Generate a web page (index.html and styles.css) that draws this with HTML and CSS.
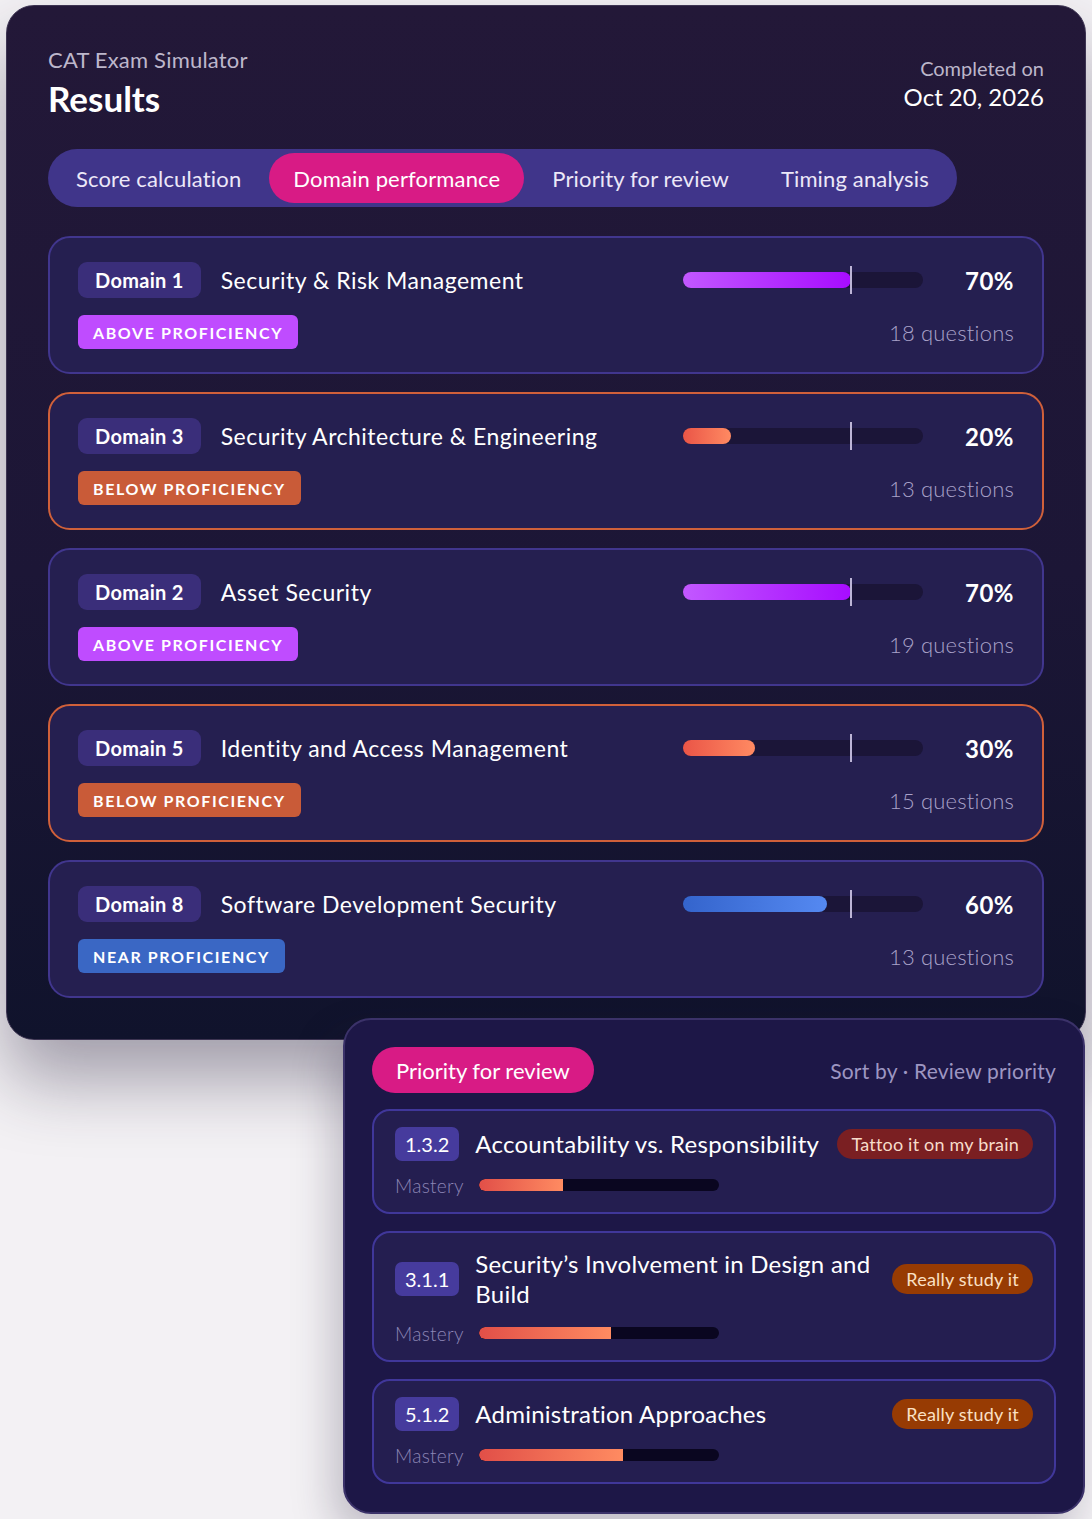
FILE: index.html
```html
<!DOCTYPE html>
<html lang="en">
<head>
<meta charset="utf-8">
<title>CAT Exam Simulator – Results</title>
<link rel="stylesheet" href="styles.css">
</head>
<body>
<div class="page">
  <section class="results">
    <header class="results-head">
      <div class="title-block">
        <div class="eyebrow">CAT Exam Simulator</div>
        <h1 class="title">Results</h1>
      </div>
      <div class="completed">
        <div class="completed-label">Completed on</div>
        <div class="completed-date">Oct 20, 2026</div>
      </div>
    </header>

    <nav class="tabs">
      <span class="tab">Score calculation</span>
      <span class="tab tab--active">Domain performance</span>
      <span class="tab">Priority for review</span>
      <span class="tab">Timing analysis</span>
    </nav>

    <div class="domains">
      <article class="domain">
        <div class="domain-row">
          <div class="domain-id"><span class="domain-tag">Domain 1</span><span class="domain-name">Security &amp; Risk Management</span></div>
          <div class="domain-score"><div class="bar"><div class="bar-fill bar-fill--above" style="width:70%"></div><span class="bar-mark"></span></div><span class="pct">70%</span></div>
        </div>
        <div class="domain-row">
          <span class="status status--above">Above proficiency</span>
          <span class="qcount">18 questions</span>
        </div>
      </article>

      <article class="domain domain--below">
        <div class="domain-row">
          <div class="domain-id"><span class="domain-tag">Domain 3</span><span class="domain-name">Security Architecture &amp; Engineering</span></div>
          <div class="domain-score"><div class="bar"><div class="bar-fill bar-fill--below" style="width:20%"></div><span class="bar-mark"></span></div><span class="pct">20%</span></div>
        </div>
        <div class="domain-row">
          <span class="status status--below">Below proficiency</span>
          <span class="qcount">13 questions</span>
        </div>
      </article>

      <article class="domain">
        <div class="domain-row">
          <div class="domain-id"><span class="domain-tag">Domain 2</span><span class="domain-name">Asset Security</span></div>
          <div class="domain-score"><div class="bar"><div class="bar-fill bar-fill--above" style="width:70%"></div><span class="bar-mark"></span></div><span class="pct">70%</span></div>
        </div>
        <div class="domain-row">
          <span class="status status--above">Above proficiency</span>
          <span class="qcount">19 questions</span>
        </div>
      </article>

      <article class="domain domain--below">
        <div class="domain-row">
          <div class="domain-id"><span class="domain-tag">Domain 5</span><span class="domain-name">Identity and Access Management</span></div>
          <div class="domain-score"><div class="bar"><div class="bar-fill bar-fill--below" style="width:30%"></div><span class="bar-mark"></span></div><span class="pct">30%</span></div>
        </div>
        <div class="domain-row">
          <span class="status status--below">Below proficiency</span>
          <span class="qcount">15 questions</span>
        </div>
      </article>

      <article class="domain">
        <div class="domain-row">
          <div class="domain-id"><span class="domain-tag">Domain 8</span><span class="domain-name">Software Development Security</span></div>
          <div class="domain-score"><div class="bar"><div class="bar-fill bar-fill--near" style="width:60%"></div><span class="bar-mark"></span></div><span class="pct">60%</span></div>
        </div>
        <div class="domain-row">
          <span class="status status--near">Near proficiency</span>
          <span class="qcount">13 questions</span>
        </div>
      </article>
    </div>
  </section>

  <section class="priority">
    <header class="priority-head">
      <span class="priority-pill">Priority for review</span>
      <span class="sort">Sort by · Review priority</span>
    </header>
    <div class="topics">
      <article class="topic">
        <div class="topic-row">
          <span class="topic-code">1.3.2</span>
          <span class="topic-name">Accountability vs. Responsibility</span>
          <span class="urgency urgency--tattoo">Tattoo it on my brain</span>
        </div>
        <div class="mastery">
          <span class="mastery-label">Mastery</span>
          <div class="mastery-bar"><div class="mastery-fill" style="width:35%"></div></div>
        </div>
      </article>
      <article class="topic">
        <div class="topic-row">
          <span class="topic-code">3.1.1</span>
          <span class="topic-name">Security’s Involvement in Design and Build</span>
          <span class="urgency urgency--study">Really study it</span>
        </div>
        <div class="mastery">
          <span class="mastery-label">Mastery</span>
          <div class="mastery-bar"><div class="mastery-fill" style="width:55%"></div></div>
        </div>
      </article>
      <article class="topic">
        <div class="topic-row">
          <span class="topic-code">5.1.2</span>
          <span class="topic-name">Administration Approaches</span>
          <span class="urgency urgency--study">Really study it</span>
        </div>
        <div class="mastery">
          <span class="mastery-label">Mastery</span>
          <div class="mastery-bar"><div class="mastery-fill" style="width:60%"></div></div>
        </div>
      </article>
    </div>
  </section>
</div>
</body>
</html>
```

FILE: styles.css
```css
* { box-sizing: border-box; }

html, body {
  margin: 0;
  padding: 0;
}

body {
  background: #f3f1f4;
  font-family: "Lato", "Inter", "Liberation Sans", sans-serif;
  color: #ffffff;
  width: 1092px;
  min-height: 1519px;
  overflow: hidden;
}

.page {
  display: flex;
  flex-direction: column;
  padding: 5px 6px 0 6px;
}

/* ---------- Results card ---------- */
.results {
  position: relative;
  z-index: 1;
  background: linear-gradient(180deg, #231838 0%, #1c1636 55%, #10132c 100%);
  border: 1px solid #3d3452;
  border-radius: 28px;
  padding: 41px;
  box-shadow: 0 40px 70px rgba(40, 32, 60, 0.4);
}

.results-head {
  display: flex;
  justify-content: space-between;
  align-items: flex-end;
}

.eyebrow {
  font-size: 22px;
  line-height: 26px;
  letter-spacing: 0.2px;
  color: #bdb7cb;
}

.title {
  margin: 5px 0 0 0;
  font-size: 35px;
  line-height: 40px;
  font-weight: 700;
}

.completed {
  text-align: right;
  padding-bottom: 6px;
}

.completed-label {
  font-size: 20px;
  line-height: 22px;
  margin-bottom: 3px;
  color: #bcb6ca;
}

.completed-date {
  font-size: 24px;
  line-height: 30px;
  color: #ffffff;
}

/* ---------- Tabs ---------- */
.tabs {
  display: inline-flex;
  align-self: flex-start;
  gap: 4px;
  padding: 4px;
  margin-top: 31px;
  background: #40358a;
  border-radius: 999px;
}

.tab {
  display: flex;
  align-items: center;
  height: 50px;
  padding: 0 24px;
  font-size: 22px;
  letter-spacing: 0.15px;
  color: #ece8f8;
  border-radius: 999px;
  white-space: nowrap;
}

.tab--active {
  background: #d81b85;
  color: #ffffff;
}

/* ---------- Domain cards ---------- */
.domains {
  display: flex;
  flex-direction: column;
  gap: 18px;
  margin-top: 29px;
}

.domain {
  display: flex;
  flex-direction: column;
  gap: 17px;
  background: #251f50;
  border: 2px solid #41368e;
  border-radius: 22px;
  padding: 24px 28px 23px 28px;
}

.domain--below {
  border-color: #d0603a;
}

.domain-row {
  display: flex;
  justify-content: space-between;
  align-items: center;
}

.domain-id {
  display: flex;
  align-items: center;
  gap: 20px;
}

.domain-tag {
  display: inline-flex;
  align-items: center;
  height: 36px;
  padding: 0 17px;
  background: #3a2e7a;
  border-radius: 9px;
  font-size: 20px;
  letter-spacing: 0.3px;
  font-weight: 700;
}

.domain-name {
  font-size: 23px;
  letter-spacing: 0.5px;
  color: #ffffff;
}

.domain-score {
  display: flex;
  align-items: center;
}

.bar {
  position: relative;
  width: 240px;
  height: 16px;
  background: #1b1538;
  border-radius: 8px;
}

.bar-fill {
  height: 100%;
  border-radius: 8px;
}

.bar-fill--above { background: linear-gradient(90deg, #c258ff, #a70cff); }
.bar-fill--below { background: linear-gradient(90deg, #ea5547, #ff8a62); }
.bar-fill--near  { background: linear-gradient(90deg, #3464cc, #5589f1); }

.bar-mark {
  position: absolute;
  left: 70%;
  top: -6px;
  width: 2px;
  height: 28px;
  margin-left: -1px;
  background: #bdb5d6;
}

.pct {
  width: 91px;
  text-align: right;
  font-size: 24px;
  letter-spacing: 0.5px;
  font-weight: 700;
}

.status {
  display: inline-flex;
  align-items: center;
  height: 34px;
  padding: 0 15px;
  border-radius: 6px;
  font-size: 16px;
  font-weight: 700;
  letter-spacing: 1.6px;
  text-transform: uppercase;
  color: #ffffff;
}

.status--above { background: #bf4cff; }
.status--below { background: #c95b38; }
.status--near  { background: #3a67c4; }

.qcount {
  font-size: 22px;
  letter-spacing: 0.2px;
  color: #a9a2c9;
  font-weight: 300;
}

/* ---------- Priority panel ---------- */
.priority {
  position: relative;
  z-index: 2;
  align-self: flex-end;
  width: 742px;
  margin-top: -22px;
  margin-right: 1px;
  background: #1d1747;
  border: 2px solid #3b3269;
  border-radius: 28px;
  padding: 27px 27px 28px 27px;
  box-shadow: -10px 20px 40px rgba(40, 32, 60, 0.25);
}

.priority-head {
  display: flex;
  justify-content: space-between;
  align-items: center;
}

.priority-pill {
  display: inline-flex;
  align-items: center;
  height: 46px;
  padding: 0 24px;
  background: #d81b85;
  border-radius: 999px;
  font-size: 22px;
}

.sort {
  font-size: 21px;
  letter-spacing: 0.2px;
  color: #9d96c2;
}

.topics {
  display: flex;
  flex-direction: column;
  gap: 17px;
  margin-top: 16px;
}

.topic {
  display: flex;
  flex-direction: column;
  gap: 13px;
  background: #241e50;
  border: 2px solid #40379a;
  border-radius: 18px;
  padding: 16px 21px 16px 21px;
}

.topic-row {
  display: flex;
  align-items: center;
  gap: 16px;
}

.topic-code {
  display: inline-flex;
  align-items: center;
  flex: none;
  height: 34px;
  padding: 0 10px;
  background: #463b9d;
  border-radius: 7px;
  font-size: 20px;
}

.topic-name {
  flex: 1;
  font-size: 24px;
  line-height: 30px;
  letter-spacing: 0.25px;
}

.urgency {
  display: inline-flex;
  align-items: center;
  flex: none;
  height: 30px;
  padding: 0 14px;
  border-radius: 15px;
  font-size: 18px;
  letter-spacing: 0.2px;
}

.urgency--tattoo { background: #7a1f22; color: #f7dccb; }
.urgency--study  { background: #973b03; color: #fbe0c4; }

.mastery {
  display: flex;
  align-items: center;
  gap: 15px;
  height: 22px;
}

.mastery-label {
  font-size: 19px;
  letter-spacing: 0.3px;
  color: #8c86b6;
  font-weight: 300;
}

.mastery-bar {
  width: 240px;
  height: 12px;
  background: #0a0620;
  border-radius: 6px;
  overflow: hidden;
}

.mastery-fill {
  height: 100%;
  border-radius: 6px 0 0 6px;
  background: linear-gradient(90deg, #e14f48, #ff8b61);
}
```
